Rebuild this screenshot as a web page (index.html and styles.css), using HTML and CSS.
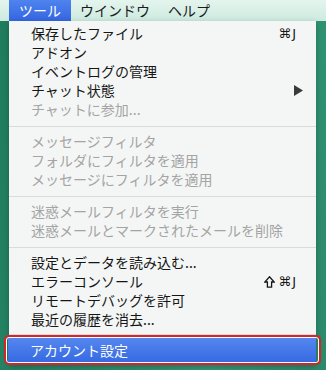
FILE: index.html
```html
<!DOCTYPE html>
<html lang="ja">
<head>
    <meta charset="UTF-8">
    <meta name="viewport" content="width=device-width, initial-scale=1.0">
    <title>ツール メニュー</title>
    <link rel="stylesheet" href="styles.css">
</head>
<body>
    <header class="menubar">
        <div class="menubar-item active">ツール</div>
        <div class="menubar-item">ウインドウ</div>
        <div class="menubar-item">ヘルプ</div>
    </header>

    <div class="menu">
        <div class="menu-item">保存したファイル<span class="shortcut">⌘J</span></div>
        <div class="menu-item">アドオン</div>
        <div class="menu-item">イベントログの管理</div>
        <div class="menu-item">チャット状態
            <svg class="submenu-arrow" width="9" height="11" viewBox="0 0 9 11"><polygon points="0,0 9,5.5 0,11" fill="#3a3a3a"/></svg>
        </div>
        <div class="menu-item disabled">チャットに参加...</div>

        <div class="separator"></div>

        <div class="menu-item disabled">メッセージフィルタ</div>
        <div class="menu-item disabled">フォルダにフィルタを適用</div>
        <div class="menu-item disabled">メッセージにフィルタを適用</div>

        <div class="separator"></div>

        <div class="menu-item disabled">迷惑メールフィルタを実行</div>
        <div class="menu-item disabled">迷惑メールとマークされたメールを削除</div>

        <div class="separator"></div>

        <div class="menu-item">設定とデータを読み込む...</div>
        <div class="menu-item">エラーコンソール
            <span class="shortcut">
                <svg class="shift-icon" width="11" height="12" viewBox="0 0 11 12"><path d="M5.5 0.8 L10.2 6 H7.6 V11.2 H3.4 V6 H0.8 Z" fill="none" stroke="#161616" stroke-width="1.3" stroke-linejoin="miter"/></svg>⌘J
            </span>
        </div>
        <div class="menu-item">リモートデバッグを許可</div>
        <div class="menu-item">最近の履歴を消去...</div>

        <div class="separator last"></div>

        <div class="menu-item selected">アカウント設定</div>
    </div>
</body>
</html>
```

FILE: styles.css
```css
* {
    margin: 0;
    padding: 0;
    box-sizing: border-box;
}

body {
    font-family: "Noto Sans CJK JP", "DejaVu Sans", sans-serif;
    font-size: 14px;
    width: 326px;
    height: 370px;
    overflow: hidden;
    background: linear-gradient(100deg, #1f7c5c 0%, #2a8c6a 40%, #349878 70%, #2b8a6b 100%);
}

.menubar {
    height: 21px;
    display: flex;
    padding-left: 9px;
    background: linear-gradient(#e4f5ee, #cdeadf);
    color: #1b1b1b;
}

.menubar-item {
    padding: 0 9px;
    line-height: 21px;
    white-space: nowrap;
}

.menubar-item.active {
    padding: 0 10px;
    color: #ffffff;
    background: linear-gradient(#4f83ee, #3466e2);
}

.menu {
    position: relative;
    width: 307px;
    margin-left: 9px;
    padding: 3px 0;
    background-color: #f4f6f5;
    box-shadow: 0 2px 6px rgba(0, 0, 0, 0.25);
}

.menu-item {
    position: relative;
    height: 19px;
    line-height: 19px;
    padding-left: 22px;
    color: #161616;
    display: flex;
    align-items: center;
    white-space: nowrap;
}

.menu-item.disabled {
    color: #a4a4a4;
}

.shortcut {
    margin-left: auto;
    margin-right: 19px;
    display: flex;
    align-items: center;
    font-family: "DejaVu Sans", sans-serif;
    font-size: 13px;
    letter-spacing: 1px;
}

.shift-icon {
    margin-right: 3px;
}

.submenu-arrow {
    margin-left: auto;
    margin-right: 13px;
}

.separator {
    height: 1px;
    margin: 7px 0 5px;
    background-color: #dadcdb;
}

.separator.last {
    margin: 5px 0 3px;
}

.menu-item.selected {
    height: 24px;
    line-height: 24px;
    margin-left: -1px;
    color: #ffffff;
    background: linear-gradient(#5587ef, #356ae3);
}

/* 赤い枠で選択項目を囲む */
.menu-item.selected::after {
    content: "";
    position: absolute;
    top: -3px;
    bottom: -3px;
    left: -4px;
    right: -5px;
    border: 2px solid #d4242c;
    border-radius: 5px;
    box-shadow: inset 0 0 0 1px #ffffff;
}
```
